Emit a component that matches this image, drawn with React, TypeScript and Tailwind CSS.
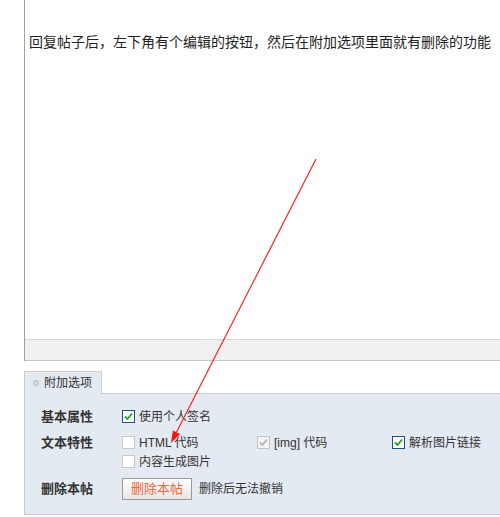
import React from 'react';

const font = { fontFamily: '"Liberation Sans", "Noto Sans CJK SC", sans-serif' };

const Check: React.FC<{ checked?: boolean; disabled?: boolean }> = ({ checked, disabled }) => {
  if (disabled) {
    return (
      <span className="w-[13px] h-[13px] border border-[#c4c4bc] bg-[#f4f4f2] flex items-center justify-center shrink-0">
        <svg width="9" height="9" viewBox="0 0 9 9">
          <path d="M1 4.5 L3.5 7 L8 1.5" fill="none" stroke="#b4b4ac" strokeWidth="1.8" />
        </svg>
      </span>
    );
  }
  if (checked) {
    return (
      <span className="w-[13px] h-[13px] border border-[#1c5180] bg-white flex items-center justify-center shrink-0">
        <svg width="9" height="9" viewBox="0 0 9 9">
          <path d="M1 4.5 L3.5 7 L8 1.5" fill="none" stroke="#21a121" strokeWidth="1.8" />
        </svg>
      </span>
    );
  }
  return <span className="w-[13px] h-[13px] border border-[#c8c8c0] bg-white shrink-0" />;
};

const Option: React.FC<{ label: string; checked?: boolean; disabled?: boolean }> = ({ label, checked, disabled }) => (
  <label className="w-[135px] shrink-0 flex items-center gap-[4px] text-[12px] text-[#333] whitespace-nowrap">
    <Check checked={checked} disabled={disabled} />
    <span>{label}</span>
  </label>
);

export default function App() {
  return (
    <div className="relative w-[500px] h-[517px] bg-white overflow-hidden" style={font}>
      {/* editor */}
      <div className="ml-[24px] border-l border-[#a0a0a0]">
        <div className="h-[339px] pt-[33px] pl-[4px] text-[14px] leading-[18px] text-[#222] whitespace-nowrap">
          回复帖子后，左下角有个编辑的按钮，然后在附加选项里面就有删除的功能
        </div>
        <div className="h-[22px] bg-[#f0f0f0] border-t border-[#d6d6d6] border-b border-b-[#c6c6c6]" />
      </div>

      {/* tab */}
      <div className="mt-[10px] ml-[24px] relative z-10 -mb-px w-[78px] h-[23px] bg-[#e3eaf1] border-l border-t border-r border-[#cccccc] flex items-center">
        <span className="ml-[8px] w-[6px] h-[6px] rounded-full border border-[#b0b8c0] bg-[#d8dde2]" />
        <span className="ml-[5px] text-[12px] text-[#333]">附加选项</span>
      </div>

      {/* panel */}
      <div className="ml-[24px] h-[122px] bg-[#e3eaf1] border-t border-l border-b border-[#cccccc] pl-[16px] pt-[12px] overflow-hidden">
        <div className="flex items-center h-[21px]">
          <span className="w-[81px] shrink-0 text-[13px] font-bold text-[#333]">基本属性</span>
          <Option label="使用个人签名" checked />
        </div>
        <div className="flex items-start mt-[6px]">
          <span className="w-[81px] shrink-0 h-[19px] flex items-center text-[13px] font-bold text-[#333]">文本特性</span>
          <div className="flex flex-col">
            <div className="flex items-center h-[19px]">
              <Option label="HTML 代码" />
              <Option label="[img] 代码" checked disabled />
              <Option label="解析图片链接" checked />
            </div>
            <div className="flex items-center h-[19px]">
              <Option label="内容生成图片" />
            </div>
          </div>
        </div>
        <div className="flex items-center mt-[7px] h-[22px]">
          <span className="w-[81px] shrink-0 text-[13px] font-bold text-[#333]">删除本帖</span>
          <button className="w-[70px] h-[22px] border border-[#9a9a9a] bg-gradient-to-b from-white to-[#e6e6e6] text-[13px] text-[#f2663c]">
            删除本帖
          </button>
          <span className="ml-[7px] text-[12px] text-[#333]">删除后无法撤销</span>
        </div>
      </div>

      {/* annotation arrow */}
      <svg className="absolute inset-0 pointer-events-none" width="500" height="517">
        <line x1="316" y1="159" x2="176.5" y2="432.3" stroke="#ff2020" strokeWidth="1.2" />
        <polygon points="171,443 180.1,434.1 172.9,430.5" fill="#ff1010" />
      </svg>
    </div>
  );
}
